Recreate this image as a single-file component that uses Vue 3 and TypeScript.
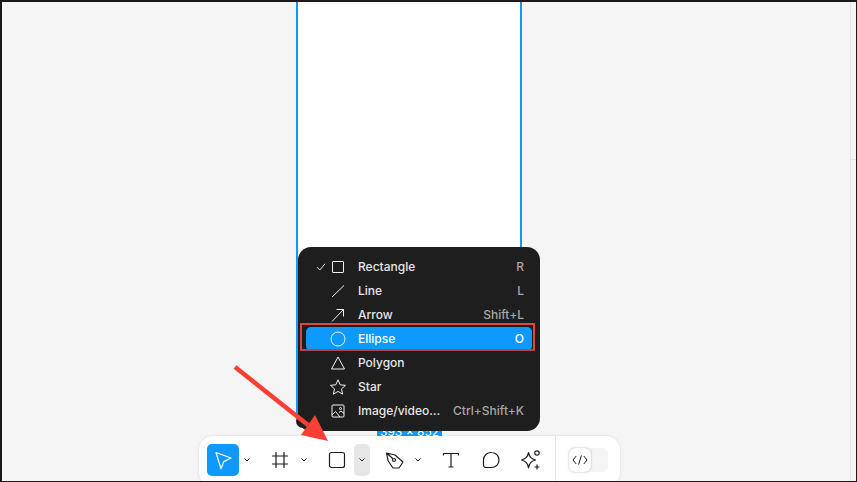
<template>
  <div class="window">
    <main class="canvas">
      <div class="frame">
        <span class="size-badge">393 × 852</span>
        <span class="frame-corner"></span>
      </div>

      <ul class="shape-menu">
        <li v-for="item in menuItems" :key="item.label" class="menu-row" :class="{ active: item.active }">
          <span class="check">
            <svg v-if="item.checked" viewBox="0 0 10 10" width="10" height="10"><path d="M1 5.2 3.8 8 9 1.8" /></svg>
          </span>
          <svg class="menu-icon" viewBox="0 0 16 16" width="16" height="16"><path :d="item.icon" /></svg>
          <span class="menu-label">{{ item.label }}</span>
          <span class="menu-key">{{ item.shortcut }}</span>
        </li>
      </ul>
      <div class="menu-highlight"></div>

      <footer class="toolbar">
        <div class="tool-group">
          <button class="tool selected" type="button" aria-label="Move">
            <svg viewBox="0 0 20 20" width="20" height="20"><path d="M3 2.5 18 8 10.8 11.6 8 18.8Z" /></svg>
          </button>
          <button class="caret" type="button" aria-label="Move options">
            <svg viewBox="0 0 8 6" width="8" height="6"><path d="M1.5 1.5 4 4 6.5 1.5" /></svg>
          </button>
          <button class="tool" type="button" aria-label="Frame">
            <svg viewBox="0 0 18 18" width="18" height="18"><path d="M5 1v16M13 1v16M1 5h16M1 13h16" /></svg>
          </button>
          <button class="caret" type="button" aria-label="Frame options">
            <svg viewBox="0 0 8 6" width="8" height="6"><path d="M1.5 1.5 4 4 6.5 1.5" /></svg>
          </button>
          <button class="tool" type="button" aria-label="Rectangle">
            <svg viewBox="0 0 18 18" width="18" height="18"><rect x="1.5" y="1.5" width="15" height="15" rx="2" /></svg>
          </button>
          <button class="caret open" type="button" aria-label="Shape options">
            <svg viewBox="0 0 8 6" width="8" height="6"><path d="M1.5 1.5 4 4 6.5 1.5" /></svg>
          </button>
          <button class="tool" type="button" aria-label="Pen">
            <svg viewBox="0 0 20 20" width="20" height="20"><path d="M1.5 3 10 5 18 12 14 18 8 18 3.2 11ZM1.5 3 8 8.8" /><circle cx="9" cy="10" r="1.5" /></svg>
          </button>
          <button class="caret pen-caret" type="button" aria-label="Pen options">
            <svg viewBox="0 0 8 6" width="8" height="6"><path d="M1.5 1.5 4 4 6.5 1.5" /></svg>
          </button>
          <button class="tool" type="button" aria-label="Text">
            <svg viewBox="0 0 18 18" width="18" height="18"><path d="M1.5 4.5V2.5h15v2M9 2.5V16M6.5 16h5" /></svg>
          </button>
          <button class="tool" type="button" aria-label="Comment">
            <svg viewBox="0 0 18 18" width="18" height="18"><path d="M9.5 1.5a7.5 7.5 0 0 1 0 15H4a2.5 2.5 0 0 1-2.5-2.5V9a7.5 7.5 0 0 1 8-7.5Z" /></svg>
          </button>
          <button class="tool" type="button" aria-label="Actions">
            <svg viewBox="0 0 20 20" width="20" height="20"><path d="M7.5 2.5C8.5 7 9.8 8.6 14.5 10 9.8 11.4 8.5 13 7.5 18 6.5 13 5.2 11.4.5 10 5.2 8.6 6.5 7 7.5 2.5Z" /><circle cx="16" cy="3" r="2.2" /><path d="M16 14.5v5M13.5 17h5" /></svg>
          </button>
        </div>
        <div class="dev-group">
          <div class="dev-switch">
            <span class="dev-knob">
              <svg viewBox="0 0 16 12" width="16" height="12"><path d="M4.2 2 1 6l3.2 4M11.8 2 15 6l-3.2 4M9.4 1.5 6.6 10.5" /></svg>
            </span>
          </div>
        </div>
      </footer>

      <svg class="arrow" viewBox="0 0 100 85" width="100" height="85" aria-hidden="true">
        <line x1="3" y1="4" x2="76" y2="62" />
        <polygon points="83,52 69,72 96,78" />
      </svg>
    </main>
    <aside class="side-panel"><div class="side-line"></div></aside>
  </div>
</template>

<script setup lang="ts">
interface MenuItem {
  label: string
  shortcut: string
  icon: string
  checked?: boolean
  active?: boolean
}

const menuItems: MenuItem[] = [
  { label: 'Rectangle', shortcut: 'R', icon: 'M3 2.5h10a.5.5 0 0 1 .5.5v10a.5.5 0 0 1-.5.5H3a.5.5 0 0 1-.5-.5V3a.5.5 0 0 1 .5-.5Z', checked: true },
  { label: 'Line', shortcut: 'L', icon: 'M2 14 14 2.5' },
  { label: 'Arrow', shortcut: 'Shift+L', icon: 'M2 14.5 13.5 2.5M6.5 2.5h7v7' },
  { label: 'Ellipse', shortcut: 'O', icon: 'M15 8a7 7 0 1 1-14 0 7 7 0 0 1 14 0Z', active: true },
  { label: 'Polygon', shortcut: '', icon: 'M8 2 14.5 14h-13Z' },
  { label: 'Star', shortcut: '', icon: 'M8 .8l2.2 5 5.3.5-4 3.6 1.2 5.3L8 12.4l-4.7 2.8 1.2-5.3-4-3.6 5.3-.5Z' },
  { label: 'Image/video…', shortcut: 'Ctrl+Shift+K', icon: 'M3 2h10a1 1 0 0 1 1 1v10a1 1 0 0 1-1 1H3a1 1 0 0 1-1-1V3a1 1 0 0 1 1-1ZM2 12l3.5-3.5L10 14M9 9.5l2-1.5 3 2.5M11.5 5.5a1 1 0 1 1-2 0 1 1 0 0 1 2 0Z' },
]
</script>

<style>
html, body { margin: 0; height: 100%; overflow: hidden; }
</style>

<style scoped>
.window {
  width: 857px;
  height: 482px;
  box-sizing: border-box;
  display: flex;
  background: #f5f5f5;
  border: solid #1a1a1a;
  border-width: 2px 1px 1px 2px;
  font-family: Inter, "Liberation Sans", sans-serif;
  overflow: hidden;
}

.canvas {
  position: relative;
  flex: 1;
}

.side-panel {
  width: 5px;
  background: #f5f5f5;
  border-left: 1px solid #e6e6e6;
}
.side-line {
  height: 1px;
  margin-top: 157px;
  background: #e6e6e6;
}

.frame {
  position: absolute;
  left: 294px;
  top: -10px;
  width: 222px;
  height: 422px;
  background: #fff;
  border: solid #0d99ff;
  border-width: 2px 2px 0;
}

.size-badge {
  position: absolute;
  left: 79px;
  top: 431px;
  width: 65px;
  height: 13px;
  line-height: 13px;
  background: #0d99ff;
  color: #fff;
  font-size: 12px;
  text-align: center;
  border-radius: 2px;
}

.frame-corner {
  position: absolute;
  left: -2px;
  top: 420px;
  width: 14px;
  height: 14px;
  border-radius: 50%;
  background: #1e1e1e;
}

.shape-menu {
  position: absolute;
  left: 296px;
  top: 245px;
  width: 242px;
  height: 184px;
  box-sizing: border-box;
  margin: 0;
  padding: 8px;
  list-style: none;
  background: #1e1e1e;
  border-radius: 13px;
}

.menu-row {
  display: flex;
  align-items: center;
  height: 24px;
  padding-right: 8px;
  color: #e6e6e6;
  font-size: 12px;
  font-weight: 500;
  border-radius: 5px;
}
.menu-row.active {
  background: #0d99ff;
  color: #fff;
}

.check {
  display: flex;
  justify-content: center;
  box-sizing: border-box;
  width: 24px;
  padding-left: 6px;
}
.check svg path {
  fill: none;
  stroke: #e6e6e6;
  stroke-width: 1;
}

.menu-icon { flex: none; }
.menu-icon path {
  fill: none;
  stroke: #f0f0f0;
  stroke-width: 1;
}

.menu-label {
  flex: 1;
  margin: -2px 0 0 12px;
}

.menu-key {
  margin-top: -2px;
  color: #a6a6a6;
  font-weight: 500;
}
.menu-row.active .menu-key { color: #fff; }

.menu-highlight {
  position: absolute;
  left: 298px;
  top: 321px;
  width: 235px;
  height: 28px;
  box-sizing: border-box;
  border: 2.5px solid #e2453a;
  border-bottom-color: #b3464d;
}

.toolbar {
  position: absolute;
  left: 197px;
  top: 434px;
  width: 421px;
  height: 50px;
  box-sizing: border-box;
  display: flex;
  background: #fff;
  border-radius: 14px;
  box-shadow: 0 0 3px rgba(0, 0, 0, 0.12);
}

.tool-group {
  flex: none;
  display: flex;
  align-items: flex-start;
  gap: 8px;
  padding: 8px 0 0 8px;
  width: 356px;
  box-sizing: border-box;
}

.tool {
  flex: none;
  display: flex;
  align-items: center;
  justify-content: center;
  width: 32px;
  height: 32px;
  padding: 0;
  background: none;
  border: none;
  border-radius: 5px;
}
.tool svg path, .tool svg rect, .tool svg circle {
  fill: none;
  stroke: #1e1e1e;
  stroke-width: 1.2;
  stroke-linejoin: round;
}
.tool.selected { background: #0d99ff; }
.tool.selected svg path { stroke: #fff; }

.caret {
  flex: none;
  display: flex;
  align-items: center;
  justify-content: center;
  width: 16px;
  height: 32px;
  margin-left: -8px;
  margin-right: 1px;
  padding: 0;
  background: none;
  border: none;
  border-radius: 5px;
}
.caret svg path {
  fill: none;
  stroke: #1e1e1e;
  stroke-width: 1;
}
.caret.open {
  margin-left: -7px;
  background: #e6e6e6;
}
.pen-caret { margin-left: -9px; }

.dev-group {
  flex: 1;
  display: flex;
  padding: 12px 0 0 13px;
  border-left: 1px solid #e6e6e6;
}

.dev-switch {
  width: 39px;
  height: 24px;
  background: #f5f5f5;
  border-radius: 6px;
}

.dev-knob {
  display: flex;
  align-items: center;
  justify-content: center;
  width: 22px;
  height: 24px;
  background: #fff;
  border-radius: 6px;
  box-shadow: 0 0 2px rgba(0, 0, 0, 0.35);
}
.dev-knob svg path {
  fill: none;
  stroke: #1e1e1e;
  stroke-width: 1;
}

.arrow {
  position: absolute;
  left: 230px;
  top: 361px;
  overflow: visible;
}
.arrow line {
  stroke: #fa4036;
  stroke-width: 4.5;
}
.arrow polygon { fill: #fa4036; }
</style>
